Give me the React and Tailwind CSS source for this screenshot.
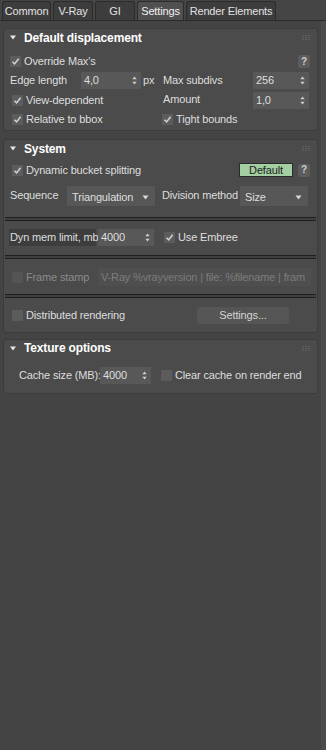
import React from 'react';

const Check = ({ checked = true, disabled = false }) => (
  <span
    className={`inline-flex items-center justify-center w-[11px] h-[11px] shrink-0 ${
      disabled ? 'bg-[#545454]' : 'bg-[#5c5c5c]'
    }`}
  >
    {checked && (
      <svg width="9" height="9" viewBox="0 0 9 9">
        <path d="M1.5 4.8 L3.6 6.9 L7.6 1.8" fill="none" stroke="#d0d0d0" strokeWidth="1.6" />
      </svg>
    )}
  </span>
);

const Arrows = () => (
  <svg width="5" height="9" viewBox="0 0 5 9" className="shrink-0">
    <path d="M2.5 0.5 L4.7 3.3 L0.3 3.3 Z" fill="#cfcfcf" />
    <path d="M2.5 8.5 L4.7 5.7 L0.3 5.7 Z" fill="#cfcfcf" />
  </svg>
);

const Caret = () => (
  <svg width="7" height="5" viewBox="0 0 7 5" className="shrink-0">
    <path d="M0.5 0.5 L6.5 0.5 L3.5 4.5 Z" fill="#d8d8d8" />
  </svg>
);

const Spinner = ({ value, className = '' }) => (
  <div className={`flex items-center justify-between h-[17px] shrink-0 bg-[#585858] pl-[3px] pr-[4px] ${className}`}>
    <span>{value}</span>
    <Arrows />
  </div>
);

const Dropdown = ({ value, className = '' }) => (
  <div className={`flex items-center justify-between h-[20px] shrink-0 bg-[#575757] pl-[5px] pr-[6px] pt-[2px] ${className}`}>
    <span>{value}</span>
    <Caret />
  </div>
);

const Help = () => (
  <span className="inline-flex items-center justify-center w-[12px] h-[13px] rounded-[2px] bg-[#5c5c5c] text-[10px] text-[#d0d0d0] font-bold">
    ?
  </span>
);

const Grip = () => (
  <div className="grid grid-cols-3 gap-[1px] opacity-70">
    {[0, 1, 2, 3, 4, 5, 6, 7, 8].map((i) => (
      <span key={i} className="w-[2px] h-[1px] bg-[#6a6a6a]" />
    ))}
  </div>
);

const Header = ({ title, h = 'h-[17px]' }) => (
  <div className={`flex items-center ${h} pl-[6px] pr-[7px]`}>
    <svg width="6" height="5" viewBox="0 0 6 5" className="mr-[8px]">
      <path d="M0 0.5 L6 0.5 L3 4.5 Z" fill="#e8e8e8" />
    </svg>
    <span className="text-[12px] font-bold text-white">{title}</span>
    <div className="ml-auto">
      <Grip />
    </div>
  </div>
);

const Separator = ({ className = '' }) => (
  <div className={`mx-[1px] h-[4px] border-y border-[#1f1f1f] bg-[#3f3f3f] ${className}`} />
);

const tabs = [
  { label: 'Common', w: 'w-[49px]' },
  { label: 'V-Ray', w: 'w-[40px]' },
  { label: 'GI', w: 'w-[40px]' },
  { label: 'Settings', w: 'w-[47px]', active: true },
  { label: 'Render Elements', w: 'w-[90px]' },
];

export default function App() {
  return (
    <div
      className="w-[326px] h-[750px] bg-[#444444] text-[#dedede] text-[11px] leading-none tracking-[-0.15px] whitespace-nowrap flex flex-col overflow-hidden"
      style={{ fontFamily: '"Liberation Sans", Arial, sans-serif' }}
    >
      {/* Tabs */}
      <div className="flex items-end h-[21px] pl-[2px] gap-[2px] border-b border-[#2a2a2a] bg-[#454545]">
        {tabs.map((t) => (
          <div
            key={t.label}
            className={`${t.w} h-[19px] flex items-center justify-center rounded-t-[3px] border border-b-0 ${
              t.active
                ? 'bg-[#505050] border-[#2c2c2c] text-[#f0f0f0]'
                : 'bg-[#3d3d3d] border-[#2c2c2c] text-[#e2e2e2]'
            }`}
          >
            {t.label}
          </div>
        ))}
      </div>

      <div className="flex flex-1">
        <div className="w-[321px] pl-[3px] pr-[3px] pt-[7px] flex flex-col">
          {/* Default displacement */}
          <div className="rounded-[3px] border border-[#3c3c3c] bg-[#4b4b4b] pb-[1px]">
            <Header title="Default displacement" />
            <div className="pt-[6px] pl-[6px] pr-[7px]">
              <div className="flex items-center h-[19px]">
                <Check />
                <span className="ml-[3px]">Override Max's</span>
                <div className="ml-auto">
                  <Help />
                </div>
              </div>
              <div className="flex items-center h-[19px]">
                <span className="w-[71px] shrink-0">Edge length</span>
                <Spinner value="4,0" className="w-[60px]" />
                <span className="w-[22px] shrink-0 pl-[2px]">px</span>
                <span className="w-[90px] shrink-0">Max subdivs</span>
                <Spinner value="256" className="w-[56px]" />
              </div>
              <div className="flex items-center h-[20px]">
                <div className="w-[153px] shrink-0 flex items-center pl-[2px]">
                  <Check />
                  <span className="ml-[3px]">View-dependent</span>
                </div>
                <span className="w-[90px] shrink-0 -mt-[2px]">Amount</span>
                <Spinner value="1,0" className="w-[56px]" />
              </div>
              <div className="flex items-center h-[19px]">
                <div className="w-[152px] shrink-0 flex items-center pl-[2px]">
                  <Check />
                  <span className="ml-[3px]">Relative to bbox</span>
                </div>
                <Check />
                <span className="ml-[3px]">Tight bounds</span>
              </div>
            </div>
          </div>

          {/* System */}
          <div className="mt-[8px] rounded-[3px] border border-[#3c3c3c] bg-[#4b4b4b] pb-[7px]">
            <Header title="System" />
            <div className="pl-[6px] pr-[7px]">
              <div className="flex items-center h-[18px] mt-[4px]">
                <div className="flex items-center pl-[2px]">
                  <Check />
                  <span className="ml-[3px]">Dynamic bucket splitting</span>
                </div>
                <div className="ml-auto flex items-center gap-[5px]">
                  <span className="w-[54px] h-[14px] flex items-center justify-center bg-[#a3cfa3] border border-[#2a2a2a] text-[#222222]">
                    Default
                  </span>
                  <Help />
                </div>
              </div>
              <div className="flex items-center h-[22px] mt-[6px]">
                <span className="w-[57px] shrink-0 -mt-[2px]">Sequence</span>
                <Dropdown value="Triangulation" className="w-[88px]" />
                <span className="w-[85px] shrink-0 pl-[7px] -mt-[2px]">Division method</span>
                <Dropdown value="Size" className="w-[68px]" />
              </div>
            </div>
            <Separator className="mt-[10px]" />
            <div className="flex items-center h-[18px] mt-[7px] pl-[5px] pr-[7px]">
              <span className="w-[87px] shrink-0 h-[17px] flex items-center pl-[1px] bg-[#3d3d3d]">Dyn mem limit, mb</span>
              <Spinner value="4000" className="w-[56px] ml-[2px]" />
              <div className="ml-[10px] flex items-center">
                <Check />
                <span className="ml-[3px]">Use Embree</span>
              </div>
            </div>
            <Separator className="mt-[9px]" />
            <div className="flex items-center h-[20px] mt-[8px] pl-[8px] pr-[6px]">
              <Check checked={false} disabled />
              <span className="ml-[3px] w-[72px] shrink-0 text-[#8a8a8a]">Frame stamp</span>
              <div className="flex-1 min-w-0 h-[18px] flex items-center bg-[#4f4f4f] pl-[3px] overflow-hidden text-[#7c7c7c]">
                V-Ray %vrayversion | file: %filename | fram
              </div>
            </div>
            <Separator className="mt-[7px]" />
            <div className="flex items-center h-[19px] mt-[8px] pl-[8px]">
              <Check checked={false} />
              <span className="ml-[3px] w-[171px] shrink-0">Distributed rendering</span>
              <span className="w-[92px] h-[17px] flex items-center justify-center rounded-[3px] bg-[#555555] text-[#d4d4d4]">
                Settings...
              </span>
            </div>
          </div>

          {/* Texture options */}
          <div className="mt-[6px] rounded-[3px] border border-[#3c3c3c] bg-[#4b4b4b] pb-[8px]">
            <Header title="Texture options" h="h-[16px]" />
            <div className="flex items-center h-[20px] mt-[9px] pl-[15px]">
              <span className="w-[81px] shrink-0">Cache size (MB):</span>
              <Spinner value="4000" className="w-[51px]" />
              <div className="ml-[10px] flex items-center">
                <Check checked={false} />
                <span className="ml-[3px]">Clear cache on render end</span>
              </div>
            </div>
          </div>
        </div>
        <div className="w-[5px] bg-[#4b4b4b]" />
      </div>
    </div>
  );
}
